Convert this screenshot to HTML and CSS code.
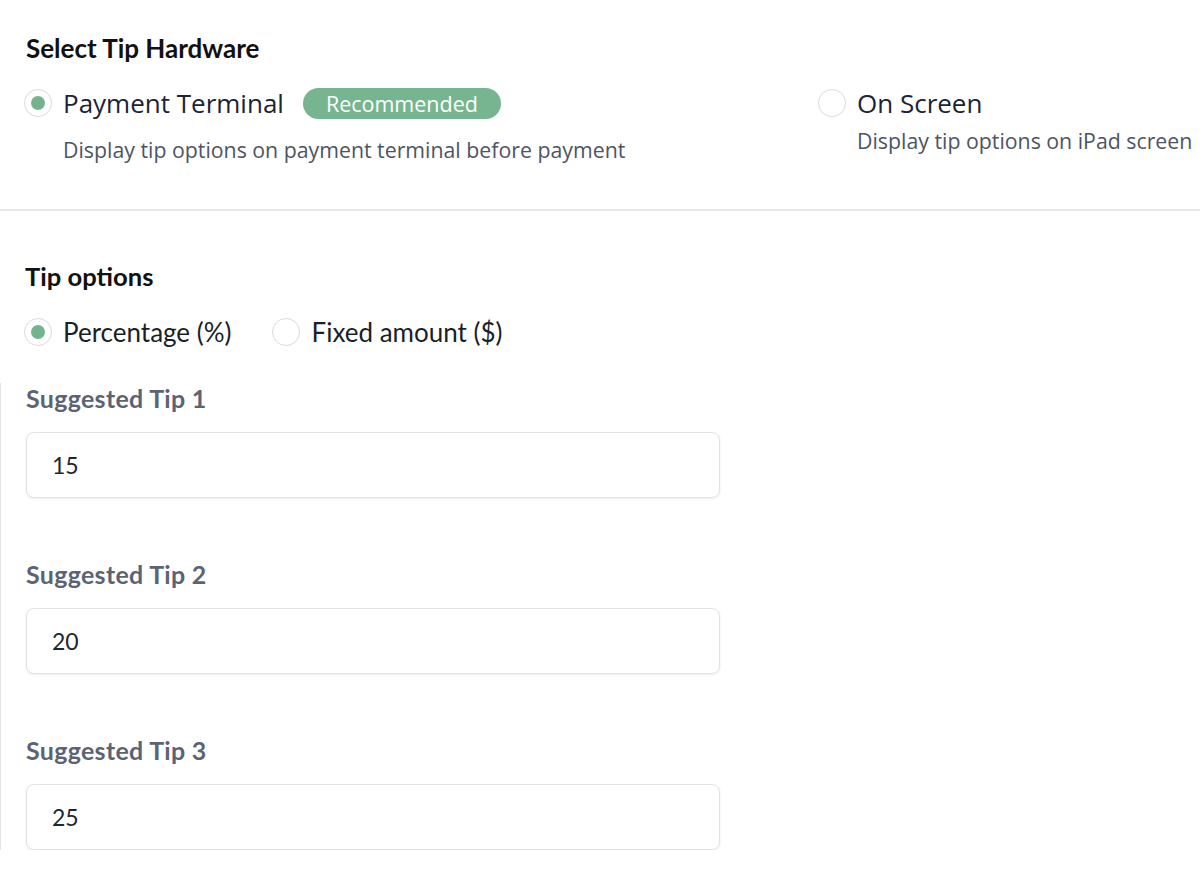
FILE: index.html
```html
<!DOCTYPE html>
<html lang="en">
<head>
    <meta charset="UTF-8">
    <title>Tip Settings</title>
    <link rel="stylesheet" href="styles.css">
</head>
<body>
    <section class="hardware">
        <h2 class="section-title">Select Tip Hardware</h2>
        <div class="hardware-options">
            <div class="hw-option">
                <div class="radio-row">
                    <span class="radio checked"></span>
                    <span class="hw-label">Payment Terminal</span>
                    <span class="badge">Recommended</span>
                </div>
                <p class="hw-desc">Display tip options on payment terminal before payment</p>
            </div>
            <div class="hw-option right">
                <div class="radio-row">
                    <span class="radio"></span>
                    <span class="hw-label">On Screen</span>
                </div>
                <p class="hw-desc tight">Display tip options on iPad screen</p>
            </div>
        </div>
    </section>

    <hr class="divider">

    <section class="tips">
        <h2 class="section-title small">Tip options</h2>
        <div class="type-row">
            <label class="type-option"><span class="radio checked"></span>Percentage (%)</label>
            <label class="type-option"><span class="radio"></span>Fixed amount ($)</label>
        </div>

        <div class="fields">
            <div class="field">
                <div class="field-label">Suggested Tip 1</div>
                <div class="field-input">15</div>
            </div>
            <div class="field">
                <div class="field-label">Suggested Tip 2</div>
                <div class="field-input">20</div>
            </div>
            <div class="field">
                <div class="field-label">Suggested Tip 3</div>
                <div class="field-input">25</div>
            </div>
        </div>
    </section>
</body>
</html>
```

FILE: styles.css
```css
body {
    margin: 0;
    background: #fff;
    font-family: 'Open Sans', sans-serif;
    color: #1d2533;
    overflow: hidden;
}

.hardware {
    padding: 33px 0 0 26px;
    height: 176px;
    box-sizing: border-box;
}

.section-title {
    font-family: Lato, sans-serif;
    font-weight: 700;
    font-size: 26px;
    color: #111;
    margin: 0;
    line-height: 30px;
}

.section-title.small {
    font-size: 25.6px;
}

.hardware-options {
    display: flex;
    margin: 24px 0 0 -2px;
}

.hw-option {
    width: 794px;
}

.hw-option.right {
    width: auto;
}

.radio-row {
    display: flex;
    align-items: center;
    height: 32px;
}

.radio {
    width: 28px;
    height: 28px;
    border: 1px solid #dcdcdc;
    border-radius: 50%;
    box-sizing: border-box;
    display: inline-flex;
    align-items: center;
    justify-content: center;
    flex-shrink: 0;
    box-shadow: 0 0 1px rgba(0,0,0,0.08);
}

.radio.checked::after {
    content: '';
    width: 14px;
    height: 14px;
    border-radius: 50%;
    background: #74b48d;
}

.hw-label {
    font-size: 26px;
    margin-left: 11px;
    color: #1b2435;
}

.badge {
    margin-left: 19px;
    background: #76b58f;
    color: #fff;
    font-size: 21.5px;
    border-radius: 16px;
    padding: 0 23px;
    line-height: 31px;
    height: 31px;
}

.hw-desc {
    margin: 17px 0 0 39px;
    font-size: 21.3px;
    line-height: 28px;
    color: #4d5563;
}

.hw-desc.tight {
    margin-top: 8px;
}

.divider {
    border: none;
    border-top: 2px solid #e6e6e6;
    margin: 33px 0 0;
}

.tips {
    padding: 50px 0 0 25px;
}

.type-row {
    display: flex;
    gap: 41px;
    margin: 25px 0 0 -1px;
    height: 32px;
}

.type-option {
    display: flex;
    align-items: center;
    font-family: Lato, sans-serif;
    font-size: 26px;
    color: #1a1f28;
}

.type-option .radio {
    margin-right: 11px;
}

.fields {
    margin: 35px 0 0 -25px;
    padding-left: 25px;
    border-left: 1px solid #e4e4e4;
    width: 694px;
}

.field + .field {
    margin-top: 61px;
}

.field-label {
    font-family: Lato, sans-serif;
    font-weight: 700;
    font-size: 25px;
    color: #5b6472;
    letter-spacing: 0.3px;
    line-height: 30px;
}

.field-input {
    margin-top: 19px;
    height: 66px;
    box-sizing: border-box;
    border: 1px solid #e2e2e2;
    border-radius: 8px;
    box-shadow: 0 1px 3px rgba(0,0,0,0.08);
    padding: 0 25px;
    display: flex;
    align-items: center;
    font-family: Lato, sans-serif;
    font-size: 23px;
    color: #1e2633;
}
```
